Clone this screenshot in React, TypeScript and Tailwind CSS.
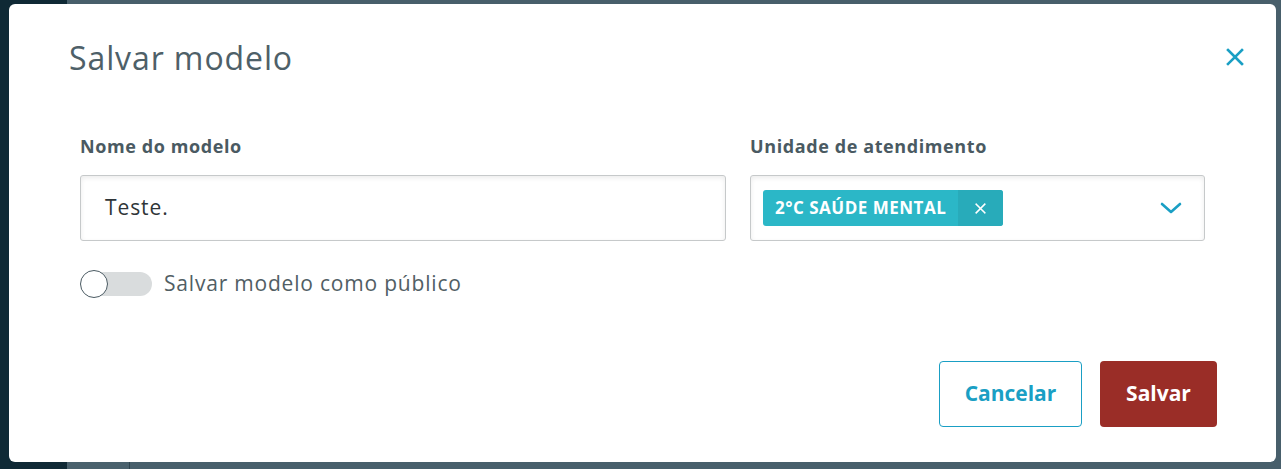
import React from "react";

function CloseIcon({ className }: { className?: string }) {
  return (
    <svg viewBox="0 0 18 18" className={className} fill="none" stroke="currentColor" strokeWidth="2.6" strokeLinecap="square">
      <path d="M2 2 L16 16 M16 2 L2 16" />
    </svg>
  );
}

function ChevronDown({ className }: { className?: string }) {
  return (
    <svg viewBox="0 0 22 14" className={className} fill="none" stroke="currentColor" strokeWidth="2.6" strokeLinecap="round" strokeLinejoin="round">
      <path d="M2 3 L11 11 L20 3" />
    </svg>
  );
}

export default function App() {
  return (
    <div className="relative h-screen w-full overflow-hidden font-['Open_Sans','Noto_Sans',sans-serif]">
      {/* app behind the overlay */}
      <div className="flex h-full">
        <div className="w-[67px] bg-[#0f2935]" />
        <div className="flex flex-1 flex-col bg-[#485f6b]">
          <div className="flex-1" />
          <div className="flex h-[7px]">
            <div className="w-[62px] bg-[#4a616d]" />
            <div className="w-px bg-[#2e444f]" />
            <div className="flex-1 bg-[#485f6b]" />
          </div>
        </div>
      </div>

      {/* modal */}
      <div className="absolute left-[9px] top-[4px] h-[458px] w-[1267px] rounded-md bg-white">
        <div className="flex items-start justify-between pl-[60px] pr-[32px] pt-[34px]">
          <h2 className="text-[32px] leading-[40px] font-normal tracking-[0.9px] text-[#4e6068]">Salvar modelo</h2>
          <button className="mt-[10px] text-[#1a9fc4]">
            <CloseIcon className="h-[18px] w-[18px]" />
          </button>
        </div>

        <div className="px-[71px] pt-[56px]">
          <div className="grid grid-cols-[646px_455px] gap-x-6">
            <div className="flex flex-col">
              <label className="text-[18px] leading-[24px] font-bold tracking-[0.6px] text-[#4a5a62]">Nome do modelo</label>
              <div className="mt-[17px] flex h-[66px] items-center rounded-[3px] border border-[#c6c9ca] px-6 shadow-[inset_0_2px_5px_rgba(0,0,0,0.08)]">
                <span className="text-[21px] tracking-[0.9px] text-[#2f3538]">Teste.</span>
              </div>
            </div>
            <div className="flex flex-col">
              <label className="text-[18px] leading-[24px] font-bold tracking-[0.6px] text-[#4a5a62]">Unidade de atendimento</label>
              <div className="mt-[17px] flex h-[66px] items-center justify-between rounded-[3px] border border-[#c6c9ca] pl-3 pr-[22px] shadow-[inset_0_2px_5px_rgba(0,0,0,0.08)]">
                <div className="flex h-9 items-stretch overflow-hidden rounded-[3px] bg-[#2bb7c7] text-white">
                  <span className="flex items-center px-3 text-[17px] font-bold tracking-[0.5px]">2°C SAÚDE MENTAL</span>
                  <span className="flex w-[45px] items-center justify-center bg-[#28abba]">
                    <CloseIcon className="h-[11px] w-[11px]" />
                  </span>
                </div>
                <ChevronDown className="h-[14px] w-[22px] text-[#1a9fc4]" />
              </div>
            </div>
          </div>

          <div className="mt-[27px] flex items-center gap-3">
            <div className="relative flex h-[28px] w-[72px] items-center">
              <div className="absolute right-0 h-6 w-[66px] rounded-full bg-[#d9dcdd]" />
              <div className="relative h-[28px] w-[28px] rounded-full border border-[#4a5a62] bg-white" />
            </div>
            <span className="text-[21px] tracking-[0.8px] text-[#515e64]">Salvar modelo como público</span>
          </div>

          <div className="mt-[61px] -mr-[12px] flex justify-end gap-[18px]">
            <button className="h-[66px] w-[143px] rounded-[4px] border border-[#1a9fc4] text-[21px] font-bold text-[#1a9fc4]">
              Cancelar
            </button>
            <button className="h-[66px] w-[117px] rounded-[4px] bg-[#9a2d27] text-[21px] font-bold text-white">
              Salvar
            </button>
          </div>
        </div>
      </div>
    </div>
  );
}
